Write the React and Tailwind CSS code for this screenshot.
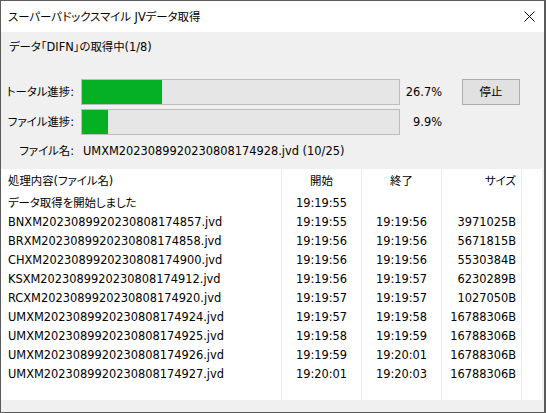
import React from "react";

const rows = [
  ["データ取得を開始しました", "19:19:55", "", ""],
  ["BNXM2023089920230808174857.jvd", "19:19:55", "19:19:56", "3971025B"],
  ["BRXM2023089920230808174858.jvd", "19:19:56", "19:19:56", "5671815B"],
  ["CHXM2023089920230808174900.jvd", "19:19:56", "19:19:56", "5530384B"],
  ["KSXM2023089920230808174912.jvd", "19:19:56", "19:19:57", "6230289B"],
  ["RCXM2023089920230808174920.jvd", "19:19:57", "19:19:57", "1027050B"],
  ["UMXM2023089920230808174924.jvd", "19:19:57", "19:19:58", "16788306B"],
  ["UMXM2023089920230808174925.jvd", "19:19:58", "19:19:59", "16788306B"],
  ["UMXM2023089920230808174926.jvd", "19:19:59", "19:20:01", "16788306B"],
  ["UMXM2023089920230808174927.jvd", "19:20:01", "19:20:03", "16788306B"],
];

function Bar({ fill }) {
  return (
    <div className="h-[26px] w-[319px] border border-[#bcbcbc] bg-[#e6e6e6]">
      <div className="h-full bg-[#06b025]" style={{ width: fill }} />
    </div>
  );
}

export default function App() {
  return (
    <div
      className="w-[546px] h-[413px] flex flex-col border-l border-r-2 border-b border-t border-[#5a5a5a] text-[11.4px] leading-[16px] text-black overflow-hidden whitespace-nowrap [font-feature-settings:'palt']"
      style={{ fontFamily: '"DejaVu Sans", "Noto Sans CJK JP", sans-serif' }}
    >
      <div className="h-[31px] shrink-0 bg-white flex items-center justify-between pl-[7px] pr-[9px]">
        <span>スーパーパドックスマイル JVデータ取得</span>
        <svg width="11" height="11" viewBox="0 0 11 11" className="mt-[-1px]">
          <path d="M0.5 0.5 L10.5 10.5 M10.5 0.5 L0.5 10.5" stroke="#000" strokeWidth="1" />
        </svg>
      </div>
      <div className="flex-1 bg-[#f0f0f0] flex flex-col pt-[7px]">
        <div className="pl-[8px] h-[16px]">データ「DIFN」の取得中(1/8)</div>
        <div className="mt-[24px] grid grid-cols-[80px_319px_42px_auto] gap-y-[4px] items-center">
          <div className="text-right pr-[7px]">トータル進捗:</div>
          <Bar fill="80px" />
          <div className="text-right">26.7%</div>
          <div className="h-[26px] ml-[20px] w-[58px] border border-[#adadad] bg-[#e1e1e1] flex items-center justify-center">
            停止
          </div>
          <div className="text-right pr-[7px]">ファイル進捗:</div>
          <Bar fill="26px" />
          <div className="text-right">9.9%</div>
          <div />
        </div>
        <div className="mt-[8px] h-[16px] flex">
          <div className="w-[73px] text-right">ファイル名:</div>
          <div className="ml-[9px]">UMXM2023089920230808174928.jvd (10/25)</div>
        </div>
        <div className="mt-[10px] mr-[2px] h-[231px] bg-white flex">
          <div className="w-[281px] border-r border-[#e8edf3] flex flex-col">
            <div className="h-[24px] flex items-center pl-[7px]">処理内容(ファイル名)</div>
            {rows.map((r, i) => (
              <div key={i} className="h-[19px] flex items-center pl-[7px]">{r[0]}</div>
            ))}
          </div>
          <div className="w-[80px] border-r border-[#e8edf3] flex flex-col">
            <div className="h-[24px] flex items-center justify-center">開始</div>
            {rows.map((r, i) => (
              <div key={i} className="h-[19px] flex items-center justify-center">{r[1]}</div>
            ))}
          </div>
          <div className="w-[80px] border-r border-[#e8edf3] flex flex-col">
            <div className="h-[24px] flex items-center justify-center">終了</div>
            {rows.map((r, i) => (
              <div key={i} className="h-[19px] flex items-center justify-center">{r[2]}</div>
            ))}
          </div>
          <div className="w-[80px] border-r border-[#e8edf3] flex flex-col">
            <div className="h-[24px] flex items-center justify-end pr-[5px]">サイズ</div>
            {rows.map((r, i) => (
              <div key={i} className="h-[19px] flex items-center justify-end pr-[5px]">{r[3]}</div>
            ))}
          </div>
          <div className="flex-1" />
        </div>
      </div>
    </div>
  );
}
